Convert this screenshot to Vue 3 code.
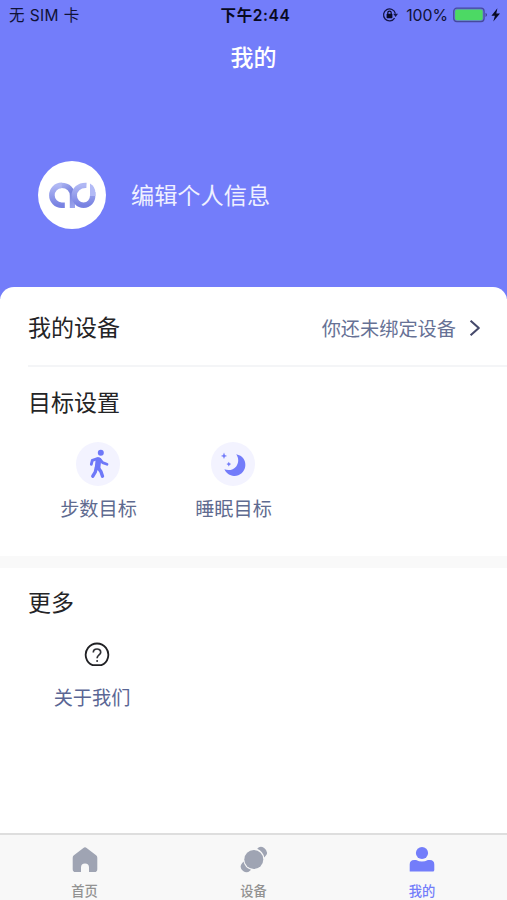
<script setup>
const tabs = [
  { id: 'home', label: '首页' },
  { id: 'device', label: '设备' },
  { id: 'mine', label: '我的', active: true },
]
</script>

<template>
  <div class="screen">
    <header class="hero">
      <div class="status">
        <span class="carrier">无 SIM 卡</span>
        <span class="time">下午2:44</span>
        <span class="power">
          <svg class="lock" viewBox="0 0 16 16" width="16" height="16">
            <path d="M12.6 11.2A6 6 0 1 1 13.4 6.6" fill="none" stroke="#15174a" stroke-width="1.3" />
            <path d="M11.2 6.8h4.8l-2.4 3.2z" fill="#15174a" />
            <rect x="4.6" y="6.8" width="5.8" height="4.4" rx=".6" fill="#090a25" />
            <path d="M5.8 7.3V5.8a1.7 1.7 0 0 1 3.4 0v1.5" fill="none" stroke="#090a25" stroke-width="1.2" />
          </svg>
          <span class="percent">100%</span>
          <svg width="48" height="16" viewBox="0 0 48 16">
            <rect x=".7" y="1.2" width="30.4" height="13.4" rx="3" fill="#6a72dc" stroke="#454a9c" stroke-width="1.2" />
            <rect x="2.1" y="2.6" width="27.6" height="10.6" rx="1.8" fill="#4cd964" />
            <path d="M32.6 5.8q2.4 2.1 0 4.2z" fill="#30346e" />
            <path d="M44.4 1.2L38.4 8.7h3.5l-1.6 5.8 6.7-8h-3.7z" fill="#090a25" />
          </svg>
        </span>
      </div>
      <h1 class="title">我的</h1>
      <div class="profile">
        <div class="avatar">
          <svg viewBox="0 0 68 68" width="68" height="68">
            <defs>
              <linearGradient id="brand" x1="0" y1="0" x2="0" y2="1">
                <stop offset="0" stop-color="#b0b8f4" />
                <stop offset="1" stop-color="#7882e2" />
              </linearGradient>
              <linearGradient id="link" gradientUnits="userSpaceOnUse" x1="22" y1="24" x2="38" y2="46">
                <stop offset="0" stop-color="#a8b1f1" />
                <stop offset=".45" stop-color="#7781dc" />
                <stop offset="1" stop-color="#a0a9ef" />
              </linearGradient>
            </defs>
            <path d="M26.8 44.2H23.6A9.7 9.9 0 0 1 23.6 24.4" fill="none" stroke="url(#brand)" stroke-width="5.6" />
            <path d="M23.2 24.4C30.5 24.2 34.4 29 34.4 34.5V46.9" fill="none" stroke="url(#link)" stroke-width="5.2" />
            <path d="M48.5 24.4C41 24 36.3 28.8 36.3 34.4C36.3 39.8 40.3 44.2 45.6 44.2C51 44.2 54.7 40 54.7 34.4V31" fill="none" stroke="url(#brand)" stroke-width="5.4" />
            <path d="M52 22.4Q57.4 25.4 57.4 32V35H52z" fill="#b2baf6" />
          </svg>
        </div>
        <span class="edit">编辑个人信息</span>
      </div>
    </header>

    <main class="sheet">
      <section class="device">
        <h2>我的设备</h2>
        <span class="hint">你还未绑定设备</span>
        <svg class="chevron" width="12" height="18" viewBox="0 0 12 18">
          <path d="M1.6 1.8L9.8 9l-8.2 7.2" fill="none" stroke="#45496b" stroke-width="2.1" stroke-linejoin="round" />
        </svg>
      </section>

      <section class="goals">
        <h2>目标设置</h2>
        <div class="grid">
          <div class="item">
            <div class="badge">
              <svg width="44" height="44" viewBox="0 0 44 44">
                <g fill="none" stroke="#6e78f8" stroke-linecap="round" stroke-linejoin="round">
                  <circle cx="24.8" cy="10.8" r="3" fill="#6e78f8" stroke="none" />
                  <path d="M22.4 18L21.6 25.4" stroke-width="5.6" />
                  <path d="M21.5 16.7L16.3 18.3L15.3 22.4M24 17.5L26.6 20.6L31 22.2" stroke-width="2.8" />
                  <path d="M20.2 26L19.3 30L16.8 34.2M22.4 26L25 29.8L26.5 34.2" stroke-width="3.4" />
                </g>
              </svg>
            </div>
            <span>步数目标</span>
          </div>
          <div class="item">
            <div class="badge">
              <svg width="44" height="44" viewBox="0 0 44 44">
                <g fill="#737cfa">
                  <path d="M25.2 12.2C31.7 13.4 34.9 18.5 34.3 24C33.6 30.2 28.5 34.2 23 33.9C18.5 33.7 15.3 31.2 13.4 27.3C17.5 29 22.5 28 25.2 24.4C27.9 20.8 27.9 16 25.2 12.2Z" />
                  <path d="M13 10.6l.9 2.4 2.2.9-2.2.9-.9 2.3-.9-2.3-2.2-.9 2.2-.9z" />
                  <path d="M17.8 19.8l.8 1.5 1.5.8-1.5.8-.8 1.5-.8-1.5-1.5-.8 1.5-.8z" />
                </g>
              </svg>
            </div>
            <span>睡眠目标</span>
          </div>
        </div>
      </section>

      <div class="gap"></div>

      <section class="more">
        <h2>更多</h2>
        <div class="about">
          <svg width="26" height="26" viewBox="0 0 26 26">
            <path d="M8.6 23.2A11.3 11.3 0 1 1 17.4 23.2Z" fill="none" stroke="#202124" stroke-width="1.8" />
            <path d="M9.3 10.4C9.3 5.9 16.7 5.9 16.7 10.2C16.7 13 13.1 12.8 13.1 16.2" fill="none" stroke="#303136" stroke-width="1.7" />
            <circle cx="13.1" cy="19" r="1" fill="#303136" />
          </svg>
          <span>关于我们</span>
        </div>
      </section>
    </main>

    <nav class="tabs">
      <div v-for="tab in tabs" :key="tab.id" class="tab" :class="{ active: tab.active }">
        <svg width="28" height="28" viewBox="0 0 28 28" fill="currentColor">
          <path v-if="tab.id === 'home'" d="M12.4 1.9Q14 .7 15.6 1.9L25.1 9.2Q26.3 10.1 26.3 11.8V23.2Q26.3 26 23.5 26H18V21.5A4 4 0 0 0 10 21.5V26H4.5Q1.7 26 1.7 23.2V11.8Q1.7 10.1 2.9 9.2Z" />
          <g v-else-if="tab.id === 'device'">
            <circle cx="13.8" cy="13.5" r="9.5" />
            <path d="M17.2 2.8Q20-.8 24.2 2Q28.6 5.6 26.3 9.1L24.3 11.5Q23 5.4 17.2 2.8Z" />
            <path d="M3.5 15.6L1.5 17.9Q-.9 21.6 3.1 25Q6.8 27.8 10 24.8L11 23.8Q4.8 22 3.5 15.6Z" />
          </g>
          <g v-else>
            <circle cx="14" cy="7" r="6.1" />
            <path d="M1.7 25.4V18.5Q1.7 14 6.2 14H8.1Q14 17.1 19.9 14H21.8Q26.3 14 26.3 18.5V23.9Q26.3 25.4 24.8 25.4Z" />
          </g>
        </svg>
        <span>{{ tab.label }}</span>
      </div>
    </nav>
  </div>
</template>

<style>
body {
  margin: 0;
  background: #fff;
}
</style>

<style scoped>
.screen {
  display: flex;
  flex-direction: column;
  width: 507px;
  height: 900px;
  overflow: hidden;
  background: #fff;
  font-family: Inter, "Noto Sans CJK SC", sans-serif;
}
.hero {
  flex: none;
  height: 299px;
  background: #737dfa;
}
.status {
  display: grid;
  grid-template-columns: 1fr auto 1fr;
  align-items: center;
  height: 30px;
  padding: 0 6px 0 9px;
  font-size: 15.5px;
  line-height: 28px;
  color: #101236;
}
.carrier {
  padding-top: 1px;
  letter-spacing: 0.4px;
}
.time {
  padding: 1px 0 0 1px;
  font-weight: 600;
  letter-spacing: 0.6px;
  color: #080920;
}
.power {
  display: flex;
  align-items: center;
  justify-content: flex-end;
}
.lock {
  margin-right: 8px;
}
.percent {
  padding-top: 1px;
  margin-right: 5px;
  font-size: 15.8px;
}
.title {
  margin: 0;
  height: 56px;
  font-size: 23px;
  font-weight: 500;
  line-height: 56px;
  text-align: center;
  color: #fff;
}
.profile {
  display: flex;
  align-items: center;
  gap: 25px;
  padding: 75px 38px 0;
}
.avatar {
  width: 68px;
  height: 68px;
  border-radius: 50%;
  background: #fff;
}
.avatar svg,
.badge svg {
  display: block;
}
.edit {
  padding-top: 2px;
  font-size: 23.2px;
  line-height: 34px;
  color: #eff0ff;
}
.sheet {
  flex: 1;
  margin-top: -12px;
  border-radius: 14px 14px 0 0;
  background: #fff;
}
h2 {
  margin: 0;
  font-size: 23px;
  font-weight: 400;
  line-height: 34px;
  color: #242426;
}
.device {
  display: flex;
  align-items: center;
  box-sizing: border-box;
  height: 80px;
  margin-left: 28px;
  padding: 4px 26px 0 0;
  border-bottom: 2px solid #f4f5f7;
}
.hint {
  margin: 0 13px 0 auto;
  padding-top: 1px;
  font-size: 19.2px;
  line-height: 30px;
  color: #667195;
}
.goals {
  height: 169px;
  padding: 19px 28px 0;
  box-sizing: border-box;
}
.grid {
  display: grid;
  grid-template-columns: repeat(2, 135px);
  margin-top: 22px;
  padding-left: 3px;
}
.item,
.about {
  display: flex;
  flex-direction: column;
  align-items: center;
  font-size: 19.2px;
  line-height: 30px;
  color: #5f6b90;
}
.item {
  gap: 8px;
}
.badge {
  width: 44px;
  height: 44px;
  margin-right: 2px;
  border-radius: 50%;
  background: #f3f3ff;
}
.gap {
  height: 12px;
  margin-top: 20px;
  background: #f9f9f9;
}
.more {
  padding: 18px 28px 0;
}
.about {
  width: 128px;
  gap: 15px;
  margin-top: 22px;
  color: #5a6694;
}
.about svg {
  margin-left: 10px;
}
.tabs {
  flex: none;
  display: grid;
  grid-template-columns: repeat(3, 1fr);
  height: 67px;
  box-sizing: border-box;
  border-top: 2px solid #dedede;
  background: #f8f8f8;
}
.tab {
  display: flex;
  flex-direction: column;
  align-items: center;
  padding: 11px 0 0;
  gap: 7px;
  font-size: 13.3px;
  line-height: 20px;
  color: #9fa4b3;
}
.tab.active {
  padding-right: 1px;
}
.tab span {
  color: #929292;
  font-weight: 500;
}
.tab.active,
.tab.active span {
  color: #737dfa;
}
</style>
